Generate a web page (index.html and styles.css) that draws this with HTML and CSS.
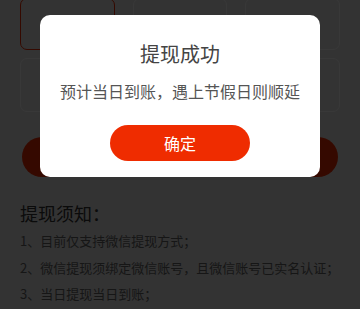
FILE: index.html
```html
<!DOCTYPE html>
<html lang="zh-CN">
<head>
    <meta charset="UTF-8">
    <meta name="viewport" content="width=device-width, initial-scale=1.0">
    <title>提现</title>
    <link rel="stylesheet" href="styles.css">
</head>
<body>

    <div class="page">
        <div class="amounts">
            <div class="amount active"></div>
            <div class="amount"></div>
            <div class="amount"></div>
            <div class="amount tall"></div>
            <div class="amount tall"></div>
            <div class="amount tall"></div>
        </div>

        <button class="submit"></button>

        <div class="notice">
            <h3>提现须知：</h3>
            <p>1、目前仅支持微信提现方式；</p>
            <p>2、微信提现须绑定微信账号，且微信账号已实名认证；</p>
            <p>3、当日提现当日到账；</p>
        </div>
    </div>

    <!-- 提现成功弹窗 -->
    <div class="mask">
        <div class="dialog">
            <div class="dialog-title">提现成功</div>
            <div class="dialog-text">预计当日到账，遇上节假日则顺延</div>
            <button class="dialog-btn">确定</button>
        </div>
    </div>

</body>
</html>
```

FILE: styles.css
```css
body {
    margin: 0;
    padding: 0;
    font-family: "Noto Sans CJK SC", "Noto Sans", sans-serif;
    background-color: #e8e8e8;
    color: #333;
}

.page {
    padding: 0 20px;
}

.amounts {
    display: grid;
    grid-template-columns: repeat(3, 1fr);
    column-gap: 18px;
    row-gap: 8px;
    margin-top: -2px;
}

.amount {
    height: 52px;
    box-sizing: border-box;
    border: 1px solid #ffffff;
    border-radius: 7px;
}

.amount.tall {
    height: 54px;
}

.amount.active {
    border-color: #f02c00;
}

.submit {
    display: block;
    width: 316px;
    height: 40px;
    margin: 25px 0 0 2px;
    border: none;
    border-radius: 20px;
    background-color: #f02c00;
}

.notice {
    margin-top: 24px;
}

.notice h3 {
    margin: 0 0 3px;
    font-size: 18px;
    font-weight: normal;
    line-height: 24px;
    color: #333;
}

.notice p {
    margin: 0;
    font-size: 13px;
    line-height: 26.5px;
    color: #666;
}

/* 弹窗 */
.mask {
    position: fixed;
    left: 0;
    top: 0;
    width: 100%;
    height: 100%;
    background-color: rgba(0, 0, 0, 0.78);
    display: flex;
    flex-direction: column;
    align-items: center;
}

.dialog {
    width: 280px;
    margin-top: 15px;
    padding: 25px 0 16px;
    background-color: white;
    border-radius: 10px;
    display: flex;
    flex-direction: column;
    align-items: center;
}

.dialog-title {
    font-size: 20px;
    line-height: 28px;
    color: #444;
}

.dialog-text {
    margin-top: 12px;
    font-size: 16px;
    line-height: 22px;
    color: #555;
}

.dialog-btn {
    width: 140px;
    height: 36px;
    margin-top: 23px;
    border: none;
    border-radius: 18px;
    background-color: #ef2c00;
    color: white;
    font-family: inherit;
    font-size: 16px;
}
```
